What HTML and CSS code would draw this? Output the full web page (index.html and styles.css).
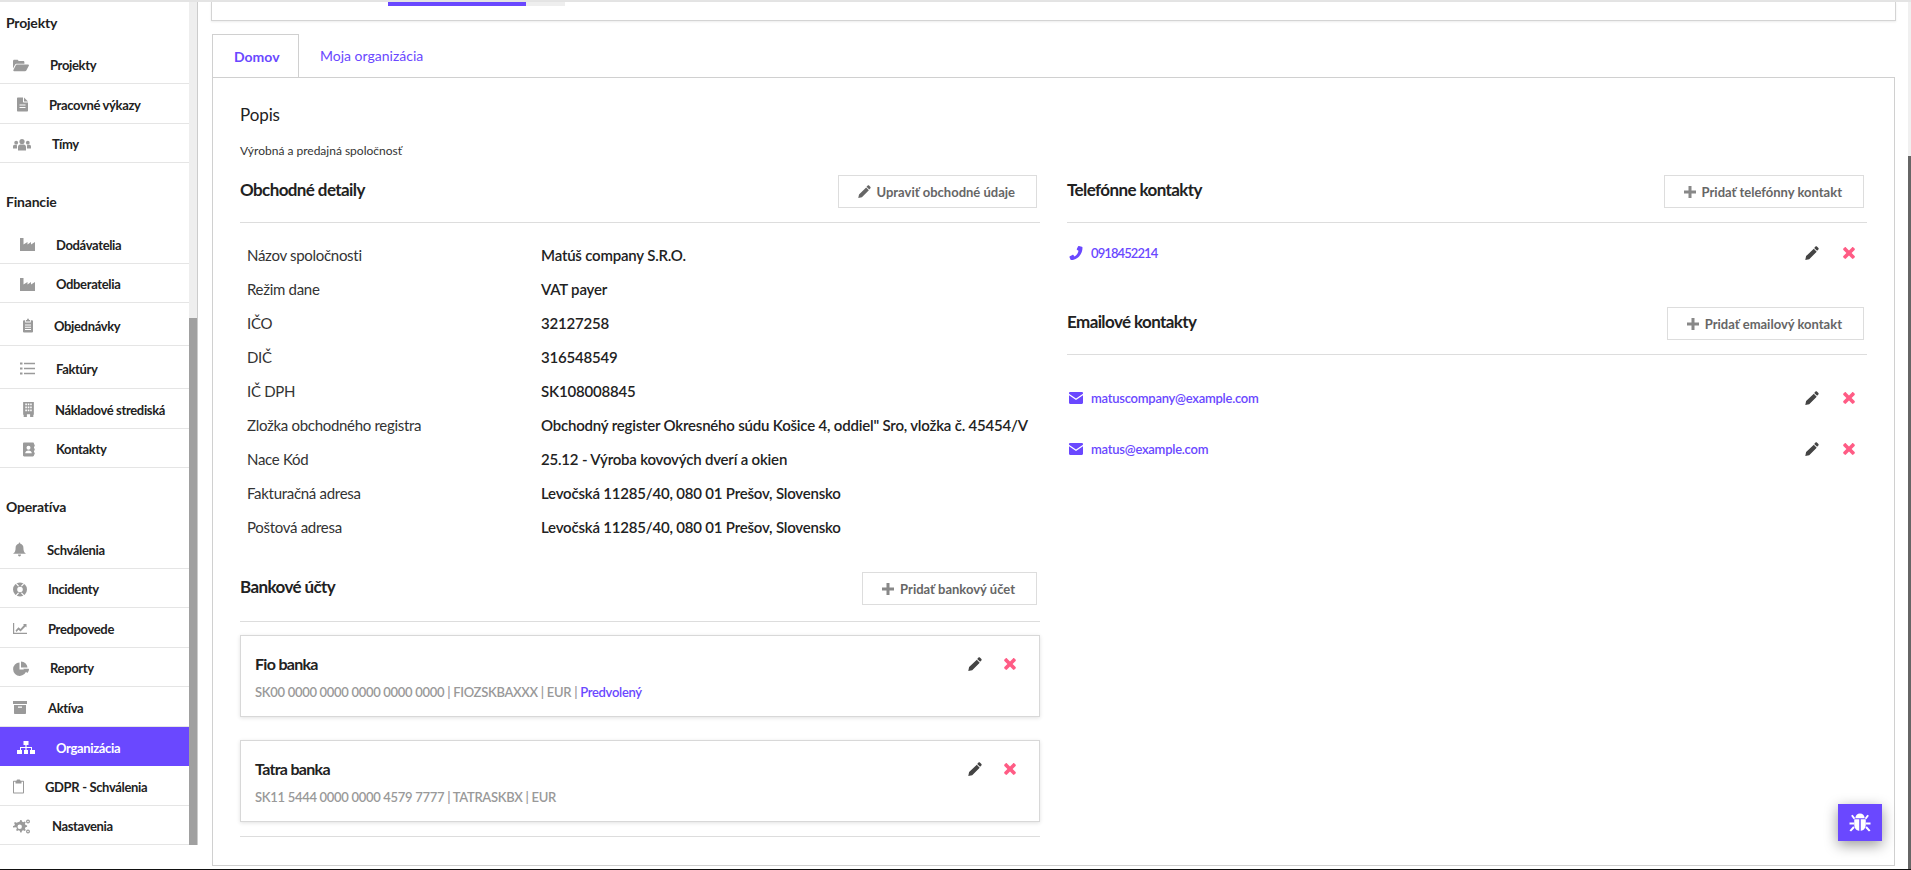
FILE: index.html
```html
<!DOCTYPE html>
<html lang="sk">
<head>
  <meta charset="UTF-8" />
  <title>Organizácia</title>
  <link rel="stylesheet" href="styles.css">
</head>
<body>

  <svg class="sprites" aria-hidden="true">
    <symbol id="i-folder" viewBox="0 0 18 14"><path d="M0 2c0-1 .6-1.6 1.5-1.6h3.2c.9 0 1.3.8 1.6 1.4h5.2c.8 0 1.3.5 1.3 1.3V5H4.5C3.3 5 2.6 5.500 2.100 6.400L0 10.500zM4.400 6H17c.8 0 1.200.7.8 1.400l-2.800 5.300c-.3.600-.8.900-1.500.9H1.300c-.8 0-1.200-.7-.8-1.400l2.500-5.200C3.300 6.300 3.700 6 4.400 6z"/></symbol>
    <symbol id="i-file" viewBox="0 0 11 14"><path d="M0 1c0-.6.400-1 1-1h5v4c0 .6.400 1 1 1h4v8c0 .6-.4 1-1 1H1c-.6 0-1-.4-1-1zM7 0l4 4H7zM2.500 7v1h6V7zm0 2.500v1h6v-1z" fill-rule="evenodd"/></symbol>
    <symbol id="i-users" viewBox="0 0 18 12"><circle cx="9" cy="3" r="2.600"/><circle cx="3.200" cy="4.200" r="1.900"/><circle cx="14.800" cy="4.200" r="1.900"/><path d="M5 12V8.500C5 7 6 6 7.200 6h3.600C12 6 13 7 13 8.500V12zM0 10V8c0-1 .7-1.700 1.600-1.700h2.200C3.900 7 4 7.600 4 8.500V10zm18 0V8c0-1-.7-1.700-1.600-1.700h-2.200c-.1.700-.2 1.300-.2 2.200V10z"/></symbol>
    <symbol id="i-industry" viewBox="0 0 15 13"><path d="M0 0h3.500v6.500L7.500 4v2.500L11 4v2.500L15 4v9H0z"/></symbol>
    <symbol id="i-order" viewBox="0 0 10 14"><path d="M3 1.500h1C4.200.5 4.500 0 5 0s.8.500 1 1.500h1V3H3zM0 2.500C0 2 .4 1.800 1 1.800h1.200V4h5.600V1.800H9c.6 0 1 .2 1 .7V13.200c0 .5-.4.800-1 .8H1c-.6 0-1-.3-1-.8zM2 6v1h6V6zm0 2.300v1h6v-1zm0 2.300v1h6v-1z" fill-rule="evenodd"/></symbol>
    <symbol id="i-list" viewBox="0 0 15 12"><path d="M0 0h2.500v2H0zm4 .2h11v1.600H4zM0 5h2.500v2H0zm4 .2h11v1.600H4zM0 10h2.500v2H0zm4 .2h11v1.600H4z"/></symbol>
    <symbol id="i-building" viewBox="0 0 10 14"><path d="M0 0h10v12h-.5v2H6.500v-2.500h-3V14H.5v-2H0zM2 1.500v1.500h1.500V1.500zm2.300 0v1.500h1.500V1.500zm2.300 0v1.500H8V1.500zM2 4.300v1.500h1.500V4.300zm2.300 0v1.500h1.500V4.300zm2.300 0v1.500H8V4.300zM2 7.100v1.500h1.500V7.100zm2.300 0v1.500h1.500V7.100zm2.300 0v1.500H8V7.100z" fill-rule="evenodd"/></symbol>
    <symbol id="i-contact" viewBox="0 0 12 14"><path d="M0 1.200C0 .5.500 0 1.200 0h8.600c.7 0 1.200.5 1.200 1.200v11.600c0 .7-.5 1.200-1.200 1.200H1.200C.5 14 0 13.500 0 12.800zM5.500 3.200a2 2 0 1 0 0 4 2 2 0 0 0 0-4zM2.200 10.800h6.600c0-1.800-1.400-2.900-3.300-2.900s-3.300 1.100-3.300 2.900z" fill-rule="evenodd"/><path d="M11.300 2h.7v2h-.7zm0 4h.7v2h-.7zm0 4h.7v2h-.7z"/></symbol>
    <symbol id="i-bell" viewBox="0 0 13 14"><path d="M6.500 0c.5 0 .8.300.8.800v.5c2 .4 3.100 2 3.100 4 0 3 .7 4.700 2.600 6H0c1.900-1.300 2.600-3 2.600-6 0-2 1.100-3.600 3.100-4V.8c0-.5.300-.8.800-.8zM5 12h3c0 1-.6 2-1.500 2S5 13 5 12z"/></symbol>
    <symbol id="i-lifering" viewBox="0 0 14 14"><path d="M7 0a7 7 0 1 1 0 14A7 7 0 0 1 7 0zm0 4.200a2.800 2.800 0 1 0 0 5.600 2.800 2.800 0 0 0 0-5.600zM2.800 1.600l2.300 2.500 1-.7-2.300-2.600zm8.400 0l-2.300 2.500-1-.7 2.300-2.600zM2.800 12.400l2.300-2.500 1 .7-2.300 2.600zm8.400 0L8.900 9.900l-1 .7 2.300 2.600z" fill-rule="evenodd"/></symbol>
    <symbol id="i-chart" viewBox="0 0 14 11"><path d="M0 0h1.200v9.800H14V11H0zM2.500 7.500l3-3.300 2 1.700L11 2l-1-1h3.500v3.500l-1-1-5 5-2-1.700-2 2.200z"/></symbol>
    <symbol id="i-pie" viewBox="0 0 16 14"><path d="M6.500 1v7h7a6.700 6.700 0 1 1-7-7zM8 0a6.500 6.500 0 0 1 6.500 6H8zm7 7.200c.2 0 .5 0 1 .2 0 1.700-.7 3-1.800 4L10.200 7.200z"/></symbol>
    <symbol id="i-archive" viewBox="0 0 14 13"><path d="M0 0h14v3H0zM1 4h12v8c0 .6-.4 1-1 1H2c-.6 0-1-.4-1-1zm4 1.500v1.200h4V5.500z" fill-rule="evenodd"/></symbol>
    <symbol id="i-sitemap" viewBox="0 0 18 13"><path d="M6.500 0h5v4H9.600v2H15v3h3v4h-5V9h1V7H9.600v2H11v4H7V9h1.400V7H4v2h1v4H0V9h3V6h5.400V4H6.500z"/></symbol>
    <symbol id="i-clipboard" viewBox="0 0 11 14"><path d="M3.500 1.200C3.500.5 4 0 5.500 0S7.500.5 7.500 1.200H10c.6 0 1 .4 1 1V13c0 .6-.4 1-1 1H1c-.6 0-1-.4-1-1V2.200c0-.6.4-1 1-1zM1 2.200V13h9V2.200H8.500V4h-6V2.200z" fill-rule="evenodd"/></symbol>
    <symbol id="i-gears" viewBox="0 0 18 14"><path d="M6 2.500l1.100-.4.5-1.600h1.200l.5 1.600 1.300.6 1.500-.8.900.9-.8 1.500.6 1.300 1.600.5v1.200l-1.600.5-.6 1.300.8 1.500-.9.900-1.500-.8-1.300.6-.5 1.600H7.600l-.5-1.600-1.300-.6-1.500.8-.9-.9.8-1.500-.6-1.300L0 7.900V6.700l1.600-.5.6-1.300-.8-1.500.9-.9 1.500.8zM7 5a2.200 2.200 0 1 0 0 4.400A2.200 2.200 0 0 0 7 5z" fill-rule="evenodd" transform="translate(-.3 0)"/><path d="M15 0a2 2 0 1 1 0 4 2 2 0 0 1 0-4zm0 1.200a.8.800 0 1 0 0 1.600.8.800 0 0 0 0-1.600zM15 10a2 2 0 1 1 0 4 2 2 0 0 1 0-4zm0 1.200a.8.800 0 1 0 0 1.600.8.800 0 0 0 0-1.600z" fill-rule="evenodd"/></symbol>
    <symbol id="i-pencil" viewBox="0 0 14 14"><path d="M10.500.6c.4-.4 1-.4 1.400 0l1.500 1.500c.4.400.4 1 0 1.400l-1.300 1.300-2.900-2.900zM8.800 2.800l2.900 2.900-7.500 7.500-3.900.8.800-3.900z"/></symbol>
    <symbol id="i-plus" viewBox="0 0 12 12"><path d="M4.500 0h3v4.500H12v3H7.500V12h-3V7.500H0v-3h4.500z"/></symbol>
    <symbol id="i-times" viewBox="0 0 12 12"><path d="M3 .4L6 3.400 9 .4c.4-.4 1-.4 1.400 0l1.200 1.200c.4.400.4 1 0 1.400L8.600 6l3 3c.4.400.4 1 0 1.400l-1.200 1.200c-.4.400-1 .4-1.400 0L6 8.600l-3 3c-.4.400-1 .4-1.400 0L.4 10.400c-.4-.4-.4-1 0-1.400l3-3-3-3c-.4-.4-.4-1 0-1.400L1.600.4C2 0 2.600 0 3 .4z"/></symbol>
    <symbol id="i-phone" viewBox="0 0 13 14"><path d="M9.500 0l2.800.8c.4.100.7.500.7.900C13 8 8 14 2 14c-.5 0-.9-.2-1-.6L0 11.200c-.1-.4 0-.8.400-1l2.500-1.300c.4-.2.800-.1 1 .2l1 1.400C7 9.500 8.600 7 9 4.700L7.700 3.900c-.4-.2-.5-.6-.4-1L8.500.5c.2-.4.600-.6 1-.5z"/></symbol>
    <symbol id="i-mail" viewBox="0 0 14 12"><path d="M1.200 0h11.600C13.500 0 14 .5 14 1.200v.5L7 6.500 0 1.700v-.5C0 .5.500 0 1.200 0zM0 3.200l7 4.800 7-4.800v7.600c0 .7-.5 1.200-1.200 1.200H1.200C.5 12 0 11.500 0 10.800z"/></symbol>
    <symbol id="i-bug" viewBox="0 0 20 20"><path d="M5.500 6C5.700 3 7.500 1.500 10 1.500S14.300 3 14.500 6z"/><path d="M4.500 7h4.800v11C6.500 17.800 4.500 15.500 4.500 12zM10.700 7h4.800v5c0 3.500-2 5.800-4.800 6z"/><path d="M1.500 3.500L3 2.500 5.500 6 4 7zM18.500 3.500L17 2.500 14.500 6 16 7zM0 10h4.500v1.800H0zM15.500 10H20v1.800h-4.500zM1.500 18.500L0 17.500 3.500 13.500 5 15zM18.500 18.500l1.500-1-3.500-4L15 15z"/></symbol>
  </svg>

  <div class="app">
    <aside class="sidebar">
      <nav class="side-menu">
        <h4 class="menu-title first">Projekty</h4>
        <a class="menu-item" href="#"><svg class="ico w16"><use href="#i-folder"/></svg>Projekty</a>
        <a class="menu-item in-17" href="#"><svg class="ico w11"><use href="#i-file"/></svg>Pracovné výkazy</a>
        <a class="menu-item" href="#"><svg class="ico w18"><use href="#i-users"/></svg>Tímy</a>

        <h4 class="menu-title">Financie</h4>
        <a class="menu-item in-20" href="#"><svg class="ico w15"><use href="#i-industry"/></svg>Dodávatelia</a>
        <a class="menu-item in-20" href="#"><svg class="ico w15"><use href="#i-industry"/></svg>Odberatelia</a>
        <a class="menu-item in-23 tall" href="#"><svg class="ico w10"><use href="#i-order"/></svg>Objednávky</a>
        <a class="menu-item in-20 tall" href="#"><svg class="ico w15"><use href="#i-list"/></svg>Faktúry</a>
        <a class="menu-item in-23" href="#"><svg class="ico w11"><use href="#i-building"/></svg>Nákladové strediská</a>
        <a class="menu-item in-23" href="#"><svg class="ico w12"><use href="#i-contact"/></svg>Kontakty</a>

        <h4 class="menu-title">Operatíva</h4>
        <a class="menu-item" href="#"><svg class="ico w13"><use href="#i-bell"/></svg>Schválenia</a>
        <a class="menu-item" href="#"><svg class="ico w14"><use href="#i-lifering"/></svg>Incidenty</a>
        <a class="menu-item" href="#"><svg class="ico w14"><use href="#i-chart"/></svg>Predpovede</a>
        <a class="menu-item" href="#"><svg class="ico w16"><use href="#i-pie"/></svg>Reporty</a>
        <a class="menu-item" href="#"><svg class="ico w14"><use href="#i-archive"/></svg>Aktíva</a>
        <a class="menu-item in-17 active" href="#"><svg class="ico w18"><use href="#i-sitemap"/></svg>Organizácia</a>
        <a class="menu-item" href="#"><svg class="ico w11"><use href="#i-clipboard"/></svg>GDPR - Schválenia</a>
        <a class="menu-item" href="#"><svg class="ico w18"><use href="#i-gears"/></svg>Nastavenia</a>
      </nav>
      <div class="side-scroll"><div class="side-thumb"></div></div>
    </aside>

    <main class="content">
      <div class="top-card">
        <div class="progress"><div class="progress-fill"></div></div>
      </div>

      <div class="tabs">
        <a class="tab active" href="#">Domov</a>
        <a class="tab" href="#">Moja organizácia</a>
      </div>

      <section class="panel">
        <h3 class="popis-title">Popis</h3>
        <p class="popis-text">Výrobná a predajná spoločnosť</p>

        <div class="columns">
          <div class="col">
            <div class="section-head">
              <h3>Obchodné detaily</h3>
              <button class="btn"><svg class="btn-ico"><use href="#i-pencil"/></svg>Upraviť obchodné údaje</button>
            </div>
            <dl class="details">
              <dt>Názov spoločnosti</dt><dd>Matúš company S.R.O.</dd>
              <dt>Režim dane</dt><dd>VAT payer</dd>
              <dt>IČO</dt><dd>32127258</dd>
              <dt>DIČ</dt><dd>316548549</dd>
              <dt>IČ DPH</dt><dd>SK108008845</dd>
              <dt>Zložka obchodného registra</dt><dd>Obchodný register Okresného súdu Košice 4, oddiel" Sro, vložka č. 45454/V</dd>
              <dt>Nace Kód</dt><dd>25.12 - Výroba kovových dverí a okien</dd>
              <dt>Fakturačná adresa</dt><dd>Levočská 11285/40, 080 01 Prešov, Slovensko</dd>
              <dt>Poštová adresa</dt><dd>Levočská 11285/40, 080 01 Prešov, Slovensko</dd>
            </dl>

            <div class="section-head bank-head">
              <h3>Bankové účty</h3>
              <button class="btn"><svg class="btn-ico plus"><use href="#i-plus"/></svg>Pridať bankový účet</button>
            </div>
            <div class="bank-list">
              <div class="bank-card">
                <div>
                  <div class="bank-name">Fio banka</div>
                  <div class="bank-meta">SK00 0000 0000 0000 0000 0000 | FIOZSKBAXXX | EUR | <a href="#">Predvolený</a></div>
                </div>
                <div class="actions">
                  <svg class="act-edit"><use href="#i-pencil"/></svg>
                  <svg class="act-del"><use href="#i-times"/></svg>
                </div>
              </div>
              <div class="bank-card">
                <div>
                  <div class="bank-name">Tatra banka</div>
                  <div class="bank-meta">SK11 5444 0000 0000 4579 7777 | TATRASKBX | EUR</div>
                </div>
                <div class="actions">
                  <svg class="act-edit"><use href="#i-pencil"/></svg>
                  <svg class="act-del"><use href="#i-times"/></svg>
                </div>
              </div>
            </div>
            <div class="bank-end"></div>
          </div>

          <div class="col">
            <div class="section-head">
              <h3>Telefónne kontakty</h3>
              <button class="btn"><svg class="btn-ico plus"><use href="#i-plus"/></svg>Pridať telefónny kontakt</button>
            </div>
            <div class="contacts phones">
              <div class="contact-row">
                <a class="phone-num" href="#"><svg class="contact-ico"><use href="#i-phone"/></svg>0918452214</a>
                <div class="actions">
                  <svg class="act-edit"><use href="#i-pencil"/></svg>
                  <svg class="act-del"><use href="#i-times"/></svg>
                </div>
              </div>
            </div>

            <div class="section-head">
              <h3>Emailové kontakty</h3>
              <button class="btn"><svg class="btn-ico plus"><use href="#i-plus"/></svg>Pridať emailový kontakt</button>
            </div>
            <div class="contacts emails">
              <div class="contact-row">
                <a href="#"><svg class="contact-ico"><use href="#i-mail"/></svg>matuscompany@example.com</a>
                <div class="actions">
                  <svg class="act-edit"><use href="#i-pencil"/></svg>
                  <svg class="act-del"><use href="#i-times"/></svg>
                </div>
              </div>
              <div class="contact-row">
                <a href="#"><svg class="contact-ico"><use href="#i-mail"/></svg>matus@example.com</a>
                <div class="actions">
                  <svg class="act-edit"><use href="#i-pencil"/></svg>
                  <svg class="act-del"><use href="#i-times"/></svg>
                </div>
              </div>
            </div>
          </div>
        </div>
      </section>
    </main>

    <div class="page-scroll"><div class="page-thumb"></div></div>
  </div>

  <button class="bug-btn" aria-label="Nahlásiť chybu"><svg class="bug-ico"><use href="#i-bug"/></svg></button>

</body>
</html>
```

FILE: styles.css
```css
* {
  box-sizing: border-box;
}
html, body {
  margin: 0;
  padding: 0;
  height: 870px;
  overflow: hidden;
}
body {
  background: #fff;
  color: #222;
  font-family: Lato, sans-serif;
  font-size: 15px;
  border-bottom: 1px solid #111;
}
a {
  color: #6a48ff;
  text-decoration: none;
}
.sprites {
  display: none;
}

.app {
  display: flex;
  height: 869px;
  border-top: 2px solid #e4e4e4;
}

/* Sidebar */
.sidebar {
  flex: 0 0 198px;
  height: 843px;
  display: flex;
  border-right: 1px solid #ccc;
}
.side-menu {
  flex: 1;
  min-width: 0;
}
.menu-title {
  margin: 0;
  height: 61px;
  padding: 17px 0 0 6px;
  font-size: 14px;
  letter-spacing: -0.2px;
  font-weight: 700;
  line-height: 22px;
  display: flex;
  align-items: center;
  color: #222;
}
.menu-title.first {
  height: 42.5px;
  padding-top: 0;
}
.menu-item {
  display: flex;
  align-items: center;
  gap: 21px;
  height: 39.5px;
  padding-left: 13px;
  padding-top: 3px;
  border-bottom: 1px solid #e5e5e5;
  color: #222;
  font-size: 13px;
  letter-spacing: -0.35px;
  font-weight: 700;
}
.menu-item.tall {
  height: 43px;
}
.menu-item.in-17 { padding-left: 17px; }
.menu-item.in-20 { padding-left: 20px; }
.menu-item.in-23 { padding-left: 23px; }
.menu-item.active {
  background: #6a48ff;
  color: #fff;
  border-bottom: 0;
}
.menu-item.active .ico {
  fill: #fff;
}
.ico {
  height: 15px;
  flex-shrink: 0;
  fill: #9a9a9a;
}
.w10 { width: 10px; }
.w11 { width: 11px; }
.w12 { width: 12px; }
.w13 { width: 13px; }
.w14 { width: 14px; }
.w15 { width: 15px; }
.w16 { width: 16px; }
.w18 { width: 18px; }

.side-scroll {
  flex: 0 0 8px;
  background: #eee;
  padding-top: 316px;
}
.side-thumb {
  height: 100%;
  background: #a0a0a0;
}

/* Main area */
.content {
  flex: 1;
  min-width: 0;
  padding: 0 12px 0 13px;
  display: flex;
  flex-direction: column;
}
.top-card {
  height: 19px;
  border: 1px solid #d4d4d4;
  border-top: 0;
  box-shadow: 0 1px 2px rgba(0,0,0,0.08);
  padding-left: 176px;
}
.progress {
  width: 177px;
  height: 4px;
  background: #eee;
}
.progress-fill {
  width: 138px;
  height: 4px;
  background: #6a48ff;
}

.tabs {
  display: flex;
  flex: 0 0 42px;
  margin: 13px 1px 0 1px;
  font-size: 14px;
}
.tab {
  display: flex;
  align-items: center;
  padding: 0 21px;
}
.tab.active {
  font-weight: 700;
  border: 1px solid #d0d0d0;
  border-bottom: 0;
  background: #fff;
  height: 43px;
  position: relative;
  z-index: 1;
  width: 87px;
}
.panel {
  flex: 0 0 789px;
  margin: 0 1px;
  border: 1px solid #d0d0d0;
  padding: 26px 27px 0 27px;
}
.popis-title {
  margin: 0;
  font-size: 17px;
  letter-spacing: -0.1px;
  line-height: 22px;
  font-weight: 400;
}
.popis-text {
  margin: 17px 0 0;
  height: 32px;
  font-size: 12px;
  line-height: 16px;
  color: #333;
}
.columns {
  display: flex;
  gap: 27px;
}
.col {
  flex: 0 0 800px;
  min-width: 0;
}

.section-head {
  display: flex;
  justify-content: space-between;
  align-items: flex-start;
  height: 48px;
  padding-right: 3px;
  border-bottom: 1px solid #ddd;
}
.section-head h3 {
  margin: 0;
  font-size: 17px;
  letter-spacing: -0.6px;
  line-height: 30px;
  font-weight: 700;
}
.btn {
  display: flex;
  align-items: center;
  gap: 6px;
  height: 33px;
  padding: 0 21px 0 19px;
  background: #fff;
  border: 1px solid #ddd;
  color: #666;
  font-family: Lato, sans-serif;
  font-size: 13px;
  font-weight: 700;
}
.btn-ico {
  width: 13px;
  height: 13px;
  fill: #666;
}
.btn-ico.plus {
  fill: #888;
  width: 12px;
  height: 12px;
}

.details {
  display: grid;
  grid-template-columns: 294px minmax(0, 1fr);
  grid-auto-rows: 34px;
  align-items: center;
  margin: 15px 0 0;
  padding-left: 7px;
}
.details dt {
  font-size: 15px;
  letter-spacing: -0.3px;
  color: #333;
}
.details dd {
  margin: 0;
  font-size: 15px;
  letter-spacing: -0.2px;
  font-weight: 600;
  color: #222;
  white-space: nowrap;
}

.bank-head {
  margin-top: 28px;
  height: 50px;
}
.bank-list {
  display: flex;
  flex-direction: column;
  gap: 23px;
  margin-top: 13px;
}
.bank-card {
  display: flex;
  justify-content: space-between;
  height: 82px;
  padding: 17px 14px 0;
  border: 1px solid #d8d8d8;
  box-shadow: 0 1px 4px rgba(0,0,0,0.12);
}
.bank-name {
  font-size: 16px;
  letter-spacing: -0.7px;
  line-height: 22px;
  font-weight: 700;
}
.bank-meta {
  margin-top: 9px;
  font-size: 13px;
  letter-spacing: -0.3px;
  line-height: 17px;
  color: #999;
  font-weight: 600;
}
.actions {
  display: flex;
  align-items: center;
  align-self: flex-start;
  gap: 22px;
  height: 22px;
  padding-right: 9px;
}
.act-edit {
  width: 14px;
  height: 14px;
  fill: #444;
}
.act-del {
  width: 12px;
  height: 12px;
  fill: #ff5c85;
}
.bank-end {
  margin-top: 14px;
  border-top: 1px solid #ddd;
}

.contacts.phones {
  height: 84px;
  padding-top: 13px;
}
.contacts.emails {
  padding-top: 26px;
  display: flex;
  flex-direction: column;
  gap: 17px;
}
.contact-row {
  display: flex;
  justify-content: space-between;
  align-items: center;
  height: 34px;
  padding-left: 2px;
}
.contact-row a {
  display: flex;
  align-items: center;
  gap: 8px;
  font-size: 13px;
  letter-spacing: -0.25px;
  font-weight: 600;
}
.contact-row a.phone-num {
  letter-spacing: -0.9px;
}
.contact-ico {
  width: 14px;
  height: 14px;
  fill: #6a48ff;
}
.contact-row .actions {
  align-self: center;
  gap: 24px;
  padding-right: 12px;
}

.page-scroll {
  flex: 0 0 3px;
  background: #f0f0f0;
  padding-top: 154px;
}
.page-thumb {
  height: 100%;
  background: #666;
}

.bug-btn {
  position: fixed;
  left: 1838px;
  top: 804px;
  width: 44px;
  height: 37px;
  display: flex;
  align-items: center;
  justify-content: center;
  padding: 0;
  border: 0;
  background: #6a48ff;
  box-shadow: 0 4px 14px rgba(0,0,0,0.4);
}
.bug-ico {
  width: 22px;
  height: 21px;
  fill: #fff;
}
```
